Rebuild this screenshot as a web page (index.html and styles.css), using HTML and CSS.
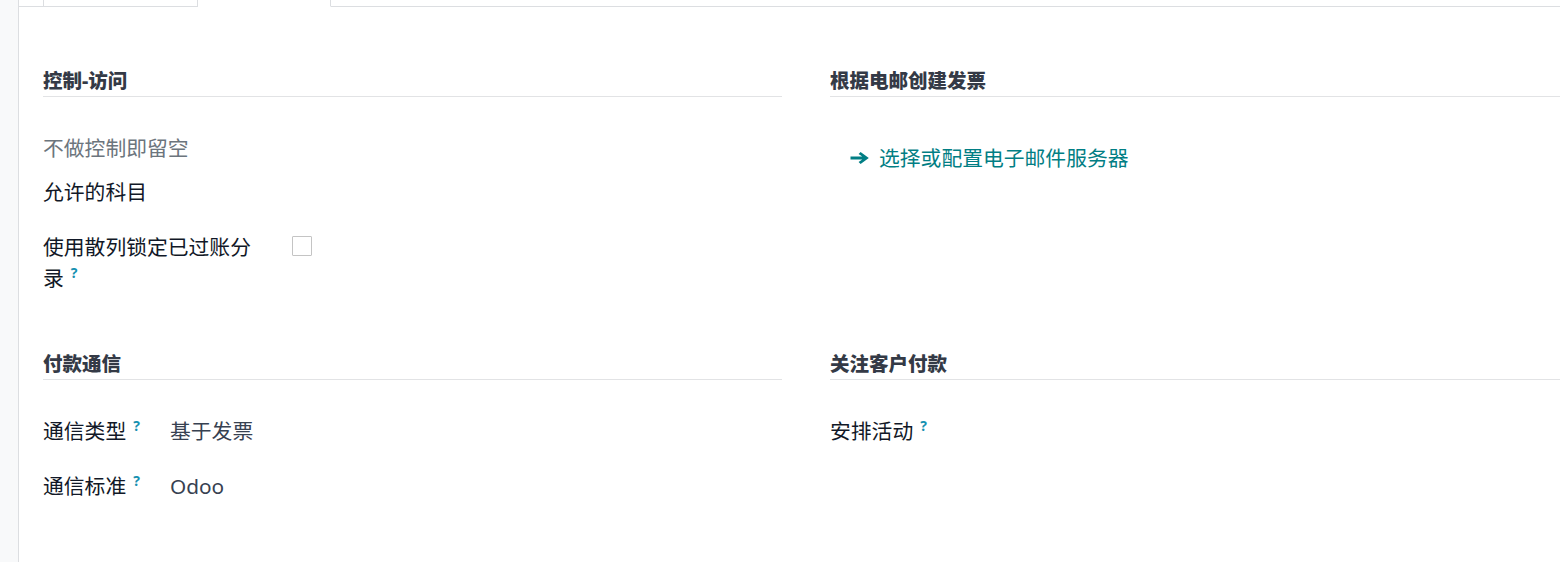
FILE: index.html
```html
<!DOCTYPE html>
<html lang="zh-CN">
<head>
  <meta charset="UTF-8">
  <title>会计设置</title>
  <link rel="stylesheet" href="styles.css">
</head>
<body>
  <div class="app">
    <aside class="side"></aside>

    <main class="sheet">
      <ul class="tabs">
        <li class="tab"></li>
        <li class="tab active"></li>
      </ul>

      <div class="settings">
        <section class="block">
          <h2>控制-访问</h2>
          <div class="hint">不做控制即留空</div>
          <div class="label-only">允许的科目</div>
          <div class="field check-field">
            <label>使用散列锁定已过账分录<sup>?</sup></label>
            <span class="checkbox"></span>
          </div>
        </section>

        <section class="block">
          <h2>根据电邮创建发票</h2>
          <a href="#" class="link-btn">
            <svg class="arrow" width="19" height="12" viewBox="0 0 19 12">
              <path d="M10.6 0 L18.8 6 L10.6 12 L8.6 10 L12.2 7.5 H0.5 V4.5 H12.2 L8.6 2 Z" fill="currentColor"/>
            </svg>
            选择或配置电子邮件服务器
          </a>
        </section>

        <section class="block">
          <h2>付款通信</h2>
          <div class="field">
            <label>通信类型<sup>?</sup></label>
            <span class="value">基于发票</span>
          </div>
          <div class="field">
            <label>通信标准<sup>?</sup></label>
            <span class="value">Odoo</span>
          </div>
        </section>

        <section class="block">
          <h2>关注客户付款</h2>
          <div class="field">
            <label>安排活动<sup>?</sup></label>
          </div>
        </section>
      </div>
    </main>
  </div>
</body>
</html>
```

FILE: styles.css
```css
html, body {
  margin: 0;
  height: 100%;
}

body {
  font-family: "Noto Sans", "Noto Sans CJK SC", sans-serif;
  font-size: 20.8px;
  line-height: 1.5;
  color: #111827;
  background: #fff;
  overflow: hidden;
}

.app {
  display: flex;
  height: 100%;
}

.side {
  width: 18px;
  flex-shrink: 0;
  background: #f8f9fa;
  border-right: 1px solid #dcdee1;
}

.sheet {
  flex: 1;
  min-width: 0;
}

/* tabs, only their bottom edge is visible */
.tabs {
  display: flex;
  list-style: none;
  margin: 0;
  padding: 0 0 0 24px;
  border-bottom: 1px solid #dcdee1;
}

.tab {
  height: 6px;
  width: 153px;
  margin-bottom: -1px;
  border-left: 1px solid #dcdee1;
  border-right: 1px solid #dcdee1;
  border-bottom: 1px solid #dcdee1;
}

.tab.active {
  width: 132px;
  border-left: none;
  border-bottom-color: #fff;
  background: #fff;
}

.settings {
  display: grid;
  grid-template-columns: 739px 1fr;
  column-gap: 48px;
  row-gap: 56px;
  padding: 60px 0 0 24px;
}

.block h2 {
  margin: 0;
  font-size: 19.5px;
  font-weight: 800;
  line-height: 28px;
  padding-bottom: 1px;
  color: #343a46;
  border-bottom: 1px solid #e2e3e5;
}

.hint {
  margin-top: 36px;
  color: #6c757d;
}

.label-only {
  margin-top: 13px;
}

.field {
  display: grid;
  grid-template-columns: 127px auto;
  margin-top: 23.5px;
}

.block h2 + .field {
  margin-top: 36px;
}

.check-field {
  grid-template-columns: 249px auto;
}

.check-field label {
  padding-right: 24px;
}

sup {
  font-size: 14px;
  font-weight: bold;
  line-height: 0;
  vertical-align: 8px;
  padding-left: 7px;
  color: #1791b1;
}

.value {
  color: #374151;
}

.checkbox {
  width: 18px;
  height: 18px;
  margin-top: 4px;
  border: 1px solid #c4c4c4;
  border-radius: 1px;
}

.link-btn {
  display: inline-flex;
  align-items: center;
  gap: 10px;
  margin-top: 45.5px;
  padding-left: 20px;
  color: #017e84;
  text-decoration: none;
}

.arrow {
  display: block;
}
```
